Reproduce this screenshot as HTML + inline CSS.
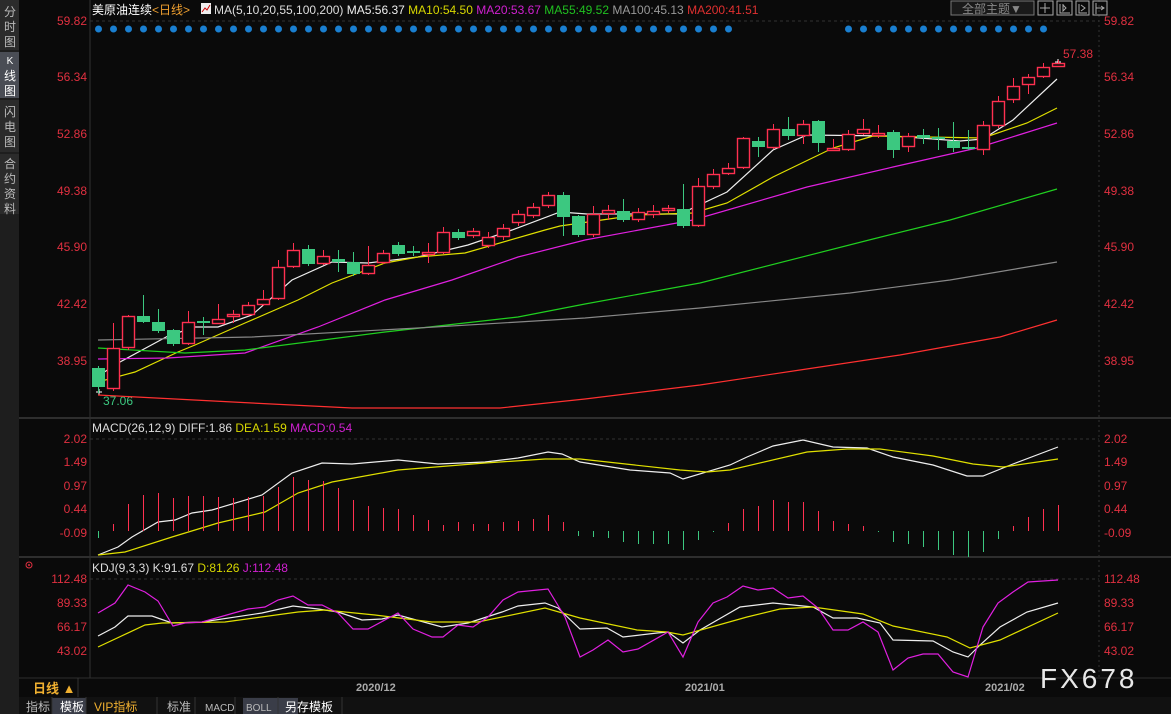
<!DOCTYPE html>
<html><head><meta charset="utf-8">
<style>
body{margin:0;background:#0a0a0a;width:1171px;height:714px;overflow:hidden;font-family:"Liberation Sans","Noto Sans CJK SC",sans-serif}
svg{position:absolute;left:0;top:0}
text{font-family:"Liberation Sans","Noto Sans CJK SC",sans-serif}
</style></head><body>
<svg id="s" width="1171" height="714" xmlns="http://www.w3.org/2000/svg">
<rect width="1171" height="714" fill="#0a0a0a"/>
<rect x="0" y="0" width="19" height="714" fill="#1e1e1e"/>
<rect x="0" y="0" width="19" height="50" fill="#2b2b2b"/>
<rect x="0" y="52" width="19" height="46" fill="#4a4d55"/>
<rect x="0" y="100" width="19" height="52" fill="#2b2b2b"/>
<rect x="0" y="154" width="19" height="60" fill="#2b2b2b"/>
<g fill="#bbb" font-size="12" text-anchor="middle">
<text x="10" y="16">分</text><text x="10" y="31">时</text><text x="10" y="46">图</text>
<text x="10" y="64" font-size="10" fill="#fff">K</text><text x="10" y="80" fill="#fff">线</text><text x="10" y="95" fill="#fff">图</text>
<text x="10" y="116">闪</text><text x="10" y="131">电</text><text x="10" y="146">图</text>
<text x="10" y="168">合</text><text x="10" y="183">约</text><text x="10" y="198">资</text><text x="10" y="213">料</text>
</g>
<line x1="90" y1="0" x2="90" y2="678" stroke="#333"/>
<line x1="1099" y1="0" x2="1099" y2="678" stroke="#333" stroke-dasharray="2,3"/>
<line x1="19" y1="418" x2="1171" y2="418" stroke="#2e2e2e" stroke-width="2"/>
<line x1="19" y1="557" x2="1171" y2="557" stroke="#2e2e2e" stroke-width="2"/>
<line x1="19" y1="678" x2="1171" y2="678" stroke="#2e2e2e" stroke-width="1"/>
<line x1="90" y1="21" x2="1099" y2="21" stroke="#333" stroke-dasharray="3,3"/>
<line x1="90" y1="439" x2="1099" y2="439" stroke="#333" stroke-dasharray="3,3"/>
<line x1="90" y1="579" x2="1099" y2="579" stroke="#333" stroke-dasharray="3,3"/>
<text x="92" y="14" font-size="12" fill="#fff">美原油连续<tspan fill="#f0a030">&lt;日线&gt;</tspan></text>
<rect x="201" y="3" width="10" height="11" fill="#eee"/><polyline points="202,12 205,8 207,10 210,5" stroke="#c00" fill="none"/>
<text x="214" y="14" font-size="12" fill="#ddd">MA(5,10,20,55,100,200) <tspan fill="#eee">MA5:56.37</tspan>  <tspan fill="#d8d800">MA10:54.50</tspan>  <tspan fill="#d020d0">MA20:53.67</tspan>  <tspan fill="#20c020">MA55:49.52</tspan>  <tspan fill="#999">MA100:45.13</tspan>  <tspan fill="#e03030">MA200:41.51</tspan></text>
<rect x="951" y="1" width="83" height="14" fill="#1a1a1a" stroke="#777"/>
<text x="962" y="13" font-size="12" fill="#888">全部主题▼</text>
<g fill="none" stroke="#aaa"><rect x="1038" y="1" width="15" height="14"/><rect x="1057" y="1" width="15" height="14"/><rect x="1076" y="1" width="13" height="14"/><rect x="1093" y="1" width="14" height="14"/>
<path d="M1045 3v10M1040 8h10M1060 4v9h10M1063 4v7l3-3-3-3M1079 4v9h8M1081 5l4 3-4 3M1096 3v11M1096 8h8M1101 6l3 2-3 2"/></g>
<g fill="#e03040" font-size="12" text-anchor="end">
<text x="87" y="25">59.82</text><text x="87" y="81">56.34</text><text x="87" y="138">52.86</text><text x="87" y="195">49.38</text><text x="87" y="251">45.90</text><text x="87" y="308">42.42</text><text x="87" y="365">38.95</text>
<text x="87" y="443">2.02</text><text x="87" y="466">1.49</text><text x="87" y="490">0.97</text><text x="87" y="513">0.44</text><text x="87" y="537">-0.09</text>
<text x="87" y="583">112.48</text><text x="87" y="607">89.33</text><text x="87" y="631">66.17</text><text x="87" y="655">43.02</text>
</g>
<g fill="#e03040" font-size="12">
<text x="1104" y="25">59.82</text><text x="1104" y="81">56.34</text><text x="1104" y="138">52.86</text><text x="1104" y="195">49.38</text><text x="1104" y="251">45.90</text><text x="1104" y="308">42.42</text><text x="1104" y="365">38.95</text>
<text x="1104" y="443">2.02</text><text x="1104" y="466">1.49</text><text x="1104" y="490">0.97</text><text x="1104" y="513">0.44</text><text x="1104" y="537">-0.09</text>
<text x="1104" y="583">112.48</text><text x="1104" y="607">89.33</text><text x="1104" y="631">66.17</text><text x="1104" y="655">43.02</text>
<text x="1063" y="58">57.38</text>
</g>
<text x="103" y="405" font-size="12" fill="#3cc880">37.06</text>
<path d="M96 392h6M99 389v6M1055 62h6M1058 59v6" stroke="#fff"/>
<g id="dots" fill="#1a7fd0"></g>
<g id="ma" fill="none" stroke-width="1.2"></g>
<g id="cd"></g>
<g id="mh"></g>
<text x="92" y="432" font-size="12" fill="#ddd">MACD(26,12,9) DIFF:1.86  <tspan fill="#d8d800">DEA:1.59</tspan>  <tspan fill="#d020d0">MACD:0.54</tspan></text>
<text x="92" y="572" font-size="12" fill="#ddd">KDJ(9,3,3) K:91.67  <tspan fill="#d8d800">D:81.26</tspan>  <tspan fill="#d020d0">J:112.48</tspan></text>
<circle cx="29" cy="565" r="3" fill="none" stroke="#e03040"/><circle cx="29" cy="565" r="1" fill="#e03040"/>
<line x1="78" y1="678" x2="78" y2="697" stroke="#333"/>
<text x="33" y="693" font-size="13" font-weight="bold" fill="#f0b030">日线 ▲</text>
<text x="356" y="691" font-size="11" font-weight="bold" fill="#aaa">2020/12</text>
<text x="685" y="691" font-size="11" font-weight="bold" fill="#aaa">2021/01</text>
<text x="985" y="691" font-size="11" font-weight="bold" fill="#aaa">2021/02</text>
<text x="1040" y="688" font-size="28" fill="#e8e8e8" letter-spacing="3">FX678</text>
<rect x="19" y="697" width="1152" height="17" fill="#111"/>
<rect x="52" y="698" width="34" height="16" fill="#3a3d48"/>
<rect x="243" y="698" width="55" height="16" fill="#3a3d48"/>
<g font-size="12" fill="#bbb">
<text x="26" y="711">指标</text><text x="60" y="711" fill="#fff">模板</text><text x="94" y="711" fill="#f0b030">VIP指标</text><text x="167" y="711">标准</text><text x="205" y="711" font-size="10">MACD</text><text x="246" y="711" font-size="10">BOLL</text><text x="285" y="711" fill="#fff">另存模板</text>
</g>
<g stroke="#333"><line x1="52" y1="697" x2="52" y2="714"/><line x1="86" y1="697" x2="86" y2="714"/><line x1="157" y1="697" x2="157" y2="714"/><line x1="195" y1="697" x2="195" y2="714"/><line x1="235" y1="697" x2="235" y2="714"/><line x1="278" y1="697" x2="278" y2="714"/><line x1="342" y1="697" x2="342" y2="714"/></g>
</svg>
<script>
var NS="http://www.w3.org/2000/svg";
function el(p,t,a){var e=document.createElementNS(NS,t);for(var k in a)e.setAttribute(k,a[k]);document.getElementById(p).appendChild(e);return e;}
for(var i=0;i<=63;i++){var x=98+15*i; if(x>735&&x<840)continue; el("dots","circle",{cx:x+0.5,cy:29,r:3.5});}
var C=[[368,387,366,393],[388,348,323,391],[347,316,315,350],[316,322,295,323],[322,331,309,333],[330,344,329,346],[343,322,311,345],[321,323,317,335],[323,319,304,324],[316,314,310,323],[314,305,302,316],[304,299,290,306],[298,267,260,300],[266,250,243,268],[249,264,245,266],[263,256,250,265],[259,262,250,272],[262,274,252,276],[273,265,246,275],[262,253,250,264],[245,254,242,256],[251,253,246,256],[253,252,243,263],[252,232,227,254],[232,238,229,240],[235,231,228,238],[245,237,232,248],[236,228,224,240],[222,214,210,226],[215,207,203,218],[205,195,192,208],[195,217,192,236],[216,235,215,237],[234,214,206,237],[213,210,205,220],[211,220,199,222],[219,212,208,222],[214,211,205,218],[210,208,205,213],[209,226,184,228],[225,186,178,227],[186,174,169,189],[173,168,163,175],[167,138,137,169],[141,147,137,157],[147,129,124,149],[129,136,117,140],[135,124,120,144],[121,143,120,152],[149,148,139,151],[149,134,130,151],[133,129,119,135],[135,133,125,138],[132,150,130,158],[146,136,133,152],[135,138,129,144],[137,139,128,150],[141,148,122,152],[147,148,130,150],[149,125,121,155],[125,101,96,128],[99,86,78,103],[84,77,74,94],[76,67,63,78],[66,63,60,67]];
C.forEach(function(c,i){var x=98+15*i,up=c[1]<c[0],col=up?"#ff3050":"#3cc880";
 var t=Math.min(c[0],c[1]),b=Math.max(c[0],c[1]);if(b-t<2)b=t+2;
 el("cd","line",{x1:x+.5,y1:c[2],x2:x+.5,y2:t,stroke:col});el("cd","line",{x1:x+.5,y1:b,x2:x+.5,y2:c[3],stroke:col});
 if(up)el("cd","rect",{x:x-5.5,y:t+.5,width:12,height:b-t,fill:"#0a0a0a",stroke:col,"stroke-width":1.4});
 else el("cd","rect",{x:x-6,y:t,width:13,height:b-t,fill:col});
});
function pl(pts,col){el("ma","polyline",{points:pts,stroke:col});}
pl("98,376 120,362 168,336 195,327 218,327 252,315 292,280 332,262 368,263 418,257 468,245 512,230 560,212 587,214 637,214 680,214 727,192 773,150 807,135 893,136 960,141 983,139 1013,120 1057,79","#eee");
pl("98,382 135,372 178,352 195,345 245,323 298,300 332,283 385,263 418,257 465,253 545,230 560,226 637,215 693,213 727,203 773,177 833,148 873,136 927,137 983,138 1027,123 1057,108","#e0e000");
pl("98,359 168,358 245,353 318,327 385,300 452,280 518,257 585,240 693,220 807,187 893,167 977,148 1057,123","#e020e0");
pl("98,348 185,353 245,350 385,332 518,317 585,304 700,283 873,239 950,220 1057,189","#20d020");
pl("98,340 252,337 418,328 585,318 700,308 850,293 950,280 1057,262","#888");
pl("98,395 252,403 352,408 500,408 585,399 700,385 800,370 900,355 1000,337 1057,320","#ff3030");
var H={113:524,128:504,143:495,158:493,173:498,188:496,203:496,218:497,233:498,248:497,263:496,278:487,293:477,308:480,323:481,338:488,353:500,368:506,383:508,398:509,413:515,428:520,443:525,458:522,473:524,488:524,503:522,518:521,533:519,548:515,563:522,98:538,578:536,593:537,608:538,623:542,638:544,653:544,668:544,683:550,698:540,713:532,728:523,743:509,758:506,773:500,788:502,803:502,818:511,833:521,848:524,863:526,878:532,893:542,908:544,923:547,938:550,953:555,968:557,983:552,998:539,1013:526,1028:517,1043:509,1058:505};
for(var k in H){var y=H[k];el("mh","line",{x1:+k+.5,x2:+k+.5,y1:Math.min(y,531),y2:Math.max(y,531),stroke:y<531?"#ff3050":"#3cc880"});}
pl("98,555 118,547 132,537 158,522 175,520 192,513 212,510 262,495 292,473 322,463 352,464 398,460 438,464 485,462 518,458 548,452 562,454 580,462 630,470 670,473 683,479 730,465 747,457 773,446 803,440 833,447 867,448 893,457 933,465 967,476 983,476 1013,464 1058,447","#eee");
pl("98,555 125,552 172,537 218,523 265,512 298,493 332,482 398,470 485,463 545,459 580,459 680,470 707,472 730,470 807,452 847,449 880,449 933,456 973,464 1003,467 1058,459","#e0e000");
pl("98,636 115,627 128,616 152,616 172,623 202,622 262,613 293,606 318,609 338,612 362,620 382,619 398,615 442,627 468,623 502,612 518,606 545,603 558,608 580,629 607,628 623,637 657,633 668,632 683,643 700,630 740,607 773,603 813,607 833,618 857,618 880,623 893,640 933,641 953,652 968,657 980,645 1000,627 1027,612 1058,603","#eee");
pl("98,647 145,625 162,623 225,622 298,612 325,610 375,615 432,622 478,622 545,608 580,618 637,630 667,632 683,635 747,617 780,609 813,607 863,614 893,626 947,637 970,648 1000,640 1058,613","#e0e000");
pl("98,613 115,603 128,585 145,592 158,601 173,626 185,623 202,622 248,609 265,607 278,600 293,596 308,605 322,605 338,613 353,629 368,629 398,613 413,629 432,637 443,637 458,625 473,627 488,617 503,600 518,592 548,589 565,617 580,657 593,650 608,640 623,652 638,649 668,632 683,657 698,622 713,603 727,597 743,586 758,590 773,588 788,598 803,596 818,608 833,630 848,630 863,622 878,632 893,670 908,658 923,654 938,654 953,672 968,677 983,627 998,603 1013,592 1028,582 1058,580","#e020e0");
</script>
</body></html>
